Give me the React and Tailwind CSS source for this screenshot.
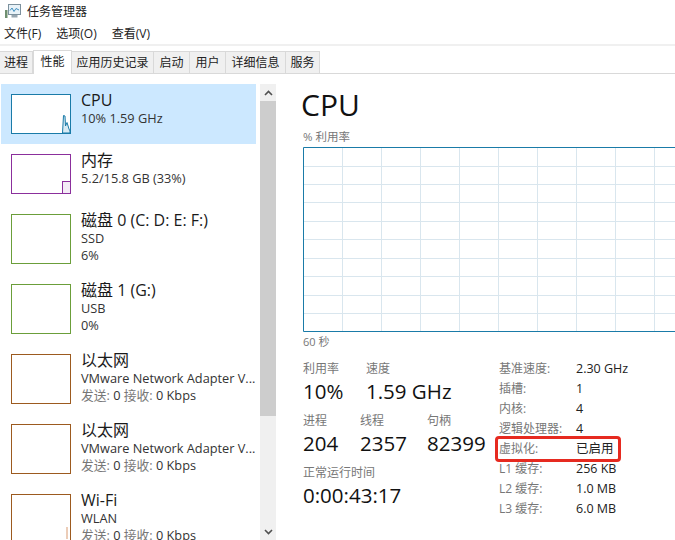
const cjk = '"Open Sans", "Noto Sans CJK SC", sans-serif';

const tabs = [
  { name: '进程', w: 'w-[33px]' },
  { name: '性能', w: 'w-[39px]', active: true },
  { name: '应用历史记录', w: 'w-[82px]' },
  { name: '启动', w: 'w-[36px]' },
  { name: '用户', w: 'w-[36px]' },
  { name: '详细信息', w: 'w-[60px]' },
  { name: '服务', w: 'w-[34px]' },
];

const items = [
  { title: 'CPU', lines: ['10% 1.59 GHz'], color: '#1a7ba8', h: 'h-[40px]', rowH: 'h-[60px]', active: true },
  { title: '内存', lines: ['5.2/15.8 GB (33%)'], color: '#8b2f9c', h: 'h-[40px]', rowH: 'h-[60px]' },
  { title: '磁盘 0 (C: D: E: F:)', lines: ['SSD', '6%'], color: '#6b9e3a', h: 'h-[50px]', rowH: 'h-[70px]' },
  { title: '磁盘 1 (G:)', lines: ['USB', '0%'], color: '#6b9e3a', h: 'h-[50px]', rowH: 'h-[70px]' },
  { title: '以太网', lines: ['VMware Network Adapter V...'], net: true, color: '#9c5a1f', h: 'h-[50px]', rowH: 'h-[70px]' },
  { title: '以太网', lines: ['VMware Network Adapter V...'], net: true, color: '#9c5a1f', h: 'h-[50px]', rowH: 'h-[70px]' },
  { title: 'Wi-Fi', lines: ['WLAN'], net: true, color: '#9c5a1f', h: 'h-[50px]', rowH: 'h-[70px]' },
];

const specs = [
  ['基准速度:', '2.30 GHz'],
  ['插槽:', '1'],
  ['内核:', '4'],
  ['逻辑处理器:', '4'],
  ['虚拟化:', '已启用'],
  ['L1 缓存:', '256 KB'],
  ['L2 缓存:', '1.0 MB'],
  ['L3 缓存:', '6.0 MB'],
];

function AppIcon() {
  return (
    <svg width="16" height="15" viewBox="0 0 16 15">
      <rect x="0" y="6" width="2.5" height="8" fill="#6f8f70" />
      <rect x="3.5" y="0.5" width="12" height="10" fill="#e8f2f8" stroke="#7c919e" />
      <path d="M5 6.5l2-2.5 2 3.5 2-3 3 1.5" fill="none" stroke="#3f8fc0" />
      <rect x="6.5" y="11" width="6" height="2.5" fill="#98a6b0" />
    </svg>
  );
}

function Thumb({ item, index }) {
  return (
    <div className={`w-[60px] ${item.h} border shrink-0 relative bg-white`} style={{ borderColor: item.color }}>
      {index === 0 && (
        <svg className="absolute right-0 bottom-0" width="10" height="20" viewBox="0 0 10 20">
          <path d="M2.5 20L3.5 2.5 5 3 5.5 13 7 9.5 9 16 10 18V20Z" fill="#d8ebf5" stroke="#1a7ba8" />
        </svg>
      )}
      {index === 1 && (
        <div className="absolute right-0 bottom-0 w-[8px] h-[12px] bg-[#f4ecf6] border-l border-t border-[#8b2f9c]" />
      )}
      {index === 6 && (
        <div className="absolute right-[2px] bottom-[4px] w-[2px] h-[12px] bg-[#eccdb8]" />
      )}
    </div>
  );
}

function SideItem({ item, index }) {
  return (
    <div className={`${item.rowH} pl-[10px] pt-[10px] flex gap-[10px] ${item.active ? 'bg-[#cce8ff]' : ''}`}>
      <Thumb item={item} index={index} />
      <div className="-mt-[4px] min-w-0 whitespace-nowrap">
        <div className="text-[16px] leading-[20px] text-[#1a1a1a]">{item.title}</div>
        {item.lines.map((l) => (
          <div key={l} className="text-[12.75px] leading-[17px] text-[#333]">{l}</div>
        ))}
        {item.net && (
          <div className="text-[12.75px] leading-[17px] text-[#333]">
            <span className="text-[#777]">发送:</span> 0 <span className="text-[#777]">接收:</span> 0 Kbps
          </div>
        )}
      </div>
    </div>
  );
}

function Chart() {
  const vLines = [39, 78, 117, 156, 195, 234, 273, 312, 351];
  const hLines = [19, 37, 55, 74, 92, 111, 129, 148, 166];
  return (
    <svg width="372" height="185" className="block">
      {vLines.map((x) => (
        <line key={x} x1={x + 0.5} y1="0" x2={x + 0.5} y2="185" stroke="#d9e6ee" />
      ))}
      {hLines.map((y) => (
        <line key={y} x1="0" y1={y + 0.5} x2="372" y2={y + 0.5} stroke="#d9e6ee" />
      ))}
      <path d="M372 0.5H0.5V184.5H372" fill="none" stroke="#1a7ba8" />
    </svg>
  );
}

function Stat({ label, value, w }) {
  return (
    <div className={w}>
      <div className="text-[12px] leading-[16px] text-[#777]">{label}</div>
      <div className="text-[20.5px] leading-[28px] text-[#111] whitespace-nowrap">{value}</div>
    </div>
  );
}

export default function App() {
  return (
    <div className="w-[675px] h-[540px] bg-white overflow-hidden flex flex-col" style={{ fontFamily: cjk }}>
      {/* title bar */}
      <div className="h-[23px] flex items-center gap-[6px] pl-[5px] shrink-0">
        <AppIcon />
        <span className="text-[12px] text-[#222]">任务管理器</span>
      </div>
      {/* menu */}
      <div className="h-[23px] flex items-center gap-[15px] pl-[4px] shrink-0 text-[12px] text-[#222] border-b-2 border-[#f0f0f0]">
        <span>文件(F)</span>
        <span>选项(O)</span>
        <span>查看(V)</span>
      </div>
      {/* tabs */}
      <div className="h-[28px] flex items-end border-b border-[#d9d9d9] shrink-0">
        {tabs.map((t) => (
          <div
            key={t.name}
            className={`${t.w} text-center text-[12px] leading-[22px] text-[#222] ${
              t.active
                ? 'h-[24px] -mb-px bg-white border border-b-0 border-[#d9d9d9]'
                : 'h-[22px] bg-[#f0f0f0] border-r border-t border-[#d9d9d9]'
            }`}
          >
            {t.name}
          </div>
        ))}
      </div>
      <div className="flex flex-1 min-h-0 pt-[10px]">
        {/* sidebar */}
        <div className="w-[255px] ml-[1px] shrink-0 overflow-hidden">
          {items.map((item, i) => (
            <SideItem key={i} item={item} index={i} />
          ))}
        </div>
        {/* scrollbar */}
        <div className="w-[16px] ml-[4px] shrink-0 bg-[#f0f0f0] flex flex-col justify-between relative">
          <div className="h-[17px] flex items-center justify-center">
            <svg width="9" height="6" viewBox="0 0 9 6"><path d="M1 5l3.5-3.5L8 5" fill="none" stroke="#505050" strokeWidth="1.6" /></svg>
          </div>
          <div className="absolute left-0 right-0 top-[17px] h-[315px] bg-[#cdcdcd]" />
          <div className="h-[17px] flex items-center justify-center">
            <svg width="9" height="6" viewBox="0 0 9 6"><path d="M1 1l3.5 3.5L8 1" fill="none" stroke="#505050" strokeWidth="1.6" /></svg>
          </div>
        </div>
        {/* main panel */}
        <div className="flex-1 min-w-0 pl-[27px] overflow-hidden">
          <div className="text-[30px] leading-[40px] mt-[1px] -ml-[2px] text-[#111]">CPU</div>
          <div className="text-[11.5px] leading-[16px] mt-[4px] text-[#777]">% 利用率</div>
          <div className="mt-[2px]">
            <Chart />
          </div>
          <div className="text-[11px] leading-[16px] mt-[2px] text-[#777]">60 秒</div>
          <div className="flex mt-[11px]">
            <div className="w-[196px] shrink-0">
              <div className="flex">
                <Stat label="利用率" value="10%" w="w-[63px]" />
                <Stat label="速度" value="1.59 GHz" />
              </div>
              <div className="flex mt-[8px]">
                <Stat label="进程" value="204" w="w-[57px]" />
                <Stat label="线程" value="2357" w="w-[67px]" />
                <Stat label="句柄" value="82399" />
              </div>
              <div className="mt-[8px]">
                <Stat label="正常运行时间" value="0:00:43:17" />
              </div>
            </div>
            <div className="text-[12px] leading-[20px] -mt-[2px]">
              {specs.map(([k, v]) => (
                <div key={k} className="flex h-[20px] relative whitespace-nowrap">
                  <span className="w-[77px] text-[#777]">{k}</span>
                  <span className="text-[12.5px] text-[#222]">{v}</span>
                  {k === '虚拟化:' && (
                    <div className="absolute -left-[4px] -top-[3px] w-[126px] h-[26px] border-[3px] border-[#e62a20] rounded-[4px]" />
                  )}
                </div>
              ))}
            </div>
          </div>
        </div>
      </div>
    </div>
  );
}
